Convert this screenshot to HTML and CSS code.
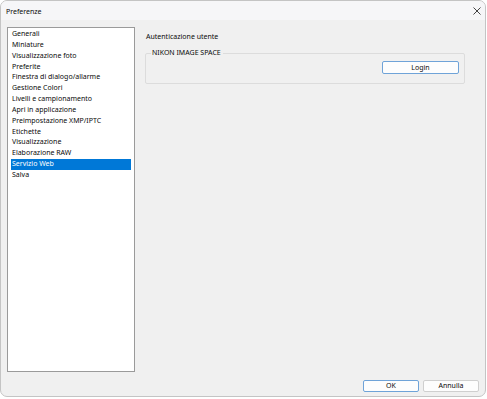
FILE: index.html
```html
<!DOCTYPE html>
<html lang="it">
  <head>
    <meta charset="UTF-8" />
    <meta name="viewport" content="width=device-width, initial-scale=1.0" />
    <title>Preferenze</title>
    <link rel="stylesheet" href="styles.css">
  </head>
  <body>
    <div class="finestra">
      <div class="titolo">
        <span>Preferenze</span>
        <svg class="chiudi" width="8" height="8" viewBox="0 0 8 8">
          <path d="M0.5 0.5 L7.5 7.5 M7.5 0.5 L0.5 7.5" stroke="#444" stroke-width="1" fill="none" />
        </svg>
      </div>
      <div class="corpo">
        <ul class="lista">
          <li>Generali</li>
          <li>Miniature</li>
          <li>Visualizzazione foto</li>
          <li>Preferite</li>
          <li>Finestra di dialogo/allarme</li>
          <li>Gestione Colori</li>
          <li>Livelli e campionamento</li>
          <li>Apri in applicazione</li>
          <li>Preimpostazione XMP/IPTC</li>
          <li>Etichette</li>
          <li>Visualizzazione</li>
          <li>Elaborazione RAW</li>
          <li class="attivo">Servizio Web</li>
          <li>Salva</li>
        </ul>
        <div class="pannello">
          <div class="intestazione">Autenticazione utente</div>
          <fieldset class="gruppo">
            <legend>NIKON IMAGE SPACE</legend>
            <button class="tasto tasto-blu login">Login</button>
          </fieldset>
        </div>
      </div>
      <div class="piede">
        <button class="tasto tasto-blu">OK</button>
        <button class="tasto">Annulla</button>
      </div>
    </div>
  </body>
</html>
```

FILE: styles.css
```css
* {
  margin: 0;
  padding: 0;
  box-sizing: border-box;
}

body {
  font-family: "Noto Sans", sans-serif;
  font-size: 7px;
  color: #0a0a0a;
  background-color: #ffffff;
}

/* finestra principale */
.finestra {
  width: 486px;
  height: 397px;
  border: 1px solid #c4c4c4;
  border-radius: 7px;
  background-color: #f0f0f0;
  overflow: hidden;
  display: flex;
  flex-direction: column;
}

.titolo {
  height: 19px;
  background-color: #f6f6f8;
  display: flex;
  align-items: center;
  justify-content: space-between;
  padding: 1px 4px 0 5px;
}

.chiudi {
  display: block;
}

.corpo {
  display: flex;
  padding: 7px 6px 0 6px;
}

/* lista delle categorie */
.lista {
  list-style: none;
  width: 128px;
  height: 345px;
  background-color: #ffffff;
  border: 1px solid #9a9a9a;
  padding: 1px 3px 0 3px;
}

.lista li {
  height: 10.85px;
  line-height: 10.85px;
  padding-left: 1px;
  white-space: nowrap;
}

.lista li.attivo {
  background-color: #0078d7;
  color: #ffffff;
}

.pannello {
  margin-left: 10px;
  padding-top: 5px;
}

.intestazione {
  line-height: 10px;
  padding-left: 1px;
}

.gruppo {
  width: 320px;
  margin-top: 6px;
  border: 1px solid #dcdcdc;
  border-radius: 2px;
  padding: 3px 5px 9px 0;
  display: flex;
  justify-content: flex-end;
}

.gruppo legend {
  margin-left: 5px;
  padding: 0 2px 0 1px;
  line-height: 10px;
}

/* pulsanti */
.tasto {
  font-family: "Noto Sans", sans-serif;
  font-size: 7px;
  color: #0a0a0a;
  width: 56px;
  height: 12px;
  line-height: 10px;
  background-color: #fdfdfd;
  border: 1px solid #cfcfcf;
  border-radius: 2px;
}

.tasto-blu {
  border-color: #6fa3d8;
}

.login {
  width: 77px;
  height: 13px;
}

.piede {
  display: flex;
  justify-content: flex-end;
  gap: 4px;
  padding: 8px 6px 0 0;
}
```
